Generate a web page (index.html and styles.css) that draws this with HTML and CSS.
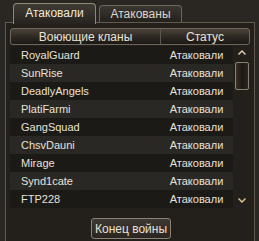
FILE: index.html
```html
<!DOCTYPE html>
<html lang="en">
<head>
    <meta charset="UTF-8">
    <title>Clan Wars</title>
    <link rel="stylesheet" href="styles.css">
</head>
<body>
    <div class="tabs">
        <div class="tab tab-active">Атаковали</div>
        <div class="tab">Атакованы</div>
    </div>

    <div class="panel">
        <div class="table-header">
            <div class="col-name">Воюющие кланы</div>
            <div class="col-status">Статус</div>
        </div>

        <div class="list-wrap">
            <div class="rows">
                <div class="row"><span class="clan">RoyalGuard</span><span class="status">Атаковали</span></div>
                <div class="row"><span class="clan">SunRise</span><span class="status">Атаковали</span></div>
                <div class="row"><span class="clan">DeadlyAngels</span><span class="status">Атаковали</span></div>
                <div class="row"><span class="clan">PlatiFarmi</span><span class="status">Атаковали</span></div>
                <div class="row"><span class="clan">GangSquad</span><span class="status">Атаковали</span></div>
                <div class="row"><span class="clan">ChsvDauni</span><span class="status">Атаковали</span></div>
                <div class="row"><span class="clan">Mirage</span><span class="status">Атаковали</span></div>
                <div class="row"><span class="clan">Synd1cate</span><span class="status">Атаковали</span></div>
                <div class="row"><span class="clan">FTP228</span><span class="status">Атаковали</span></div>
            </div>
            <div class="scrollbar">
                <svg class="arrow" width="8" height="5" viewBox="0 0 8 5"><polyline points="0.5,4.5 4,1 7.5,4.5" fill="none" stroke="#e6d6b4" stroke-width="1.4"/></svg>
                <div class="thumb"></div>
                <svg class="arrow arrow-down" width="8" height="5" viewBox="0 0 8 5"><polyline points="0.5,0.5 4,4 7.5,0.5" fill="none" stroke="#e0c89a" stroke-width="1.4"/></svg>
            </div>
        </div>

        <div class="actions">
            <button class="end-war">Конец войны</button>
        </div>
    </div>
</body>
</html>
```

FILE: styles.css
```css
html, body {
    margin: 0;
    height: 100%;
}
body {
    font-family: "Liberation Sans", Arial, sans-serif;
    font-size: 11px;
    color: #e8e2d6;
    background: #2a2723;
    padding-top: 3px;
    box-sizing: border-box;
    overflow: hidden;
}
.tabs {
    display: flex;
    align-items: flex-end;
    gap: 3px;
    margin-left: 13px;
    height: 19px;
}
.tab {
    width: 83px;
    height: 17px;
    box-sizing: border-box;
    border: 1px solid #6c655a;
    border-bottom: none;
    border-radius: 4px 4px 0 0;
    background: linear-gradient(#3a3630, #24211d);
    display: flex;
    align-items: center;
    justify-content: center;
    font-size: 12px;
    color: #ddd6c8;
}
.tab-active {
    height: 21px;
    margin-bottom: -2px;
    padding-bottom: 2px;
    position: relative;
    z-index: 1;
    border-color: #8e877b;
    background: linear-gradient(#403b33, #26231f);
    color: #eee8dc;
}
.panel {
    margin: 0 4px 0 5px;
    height: 230px;
    border: 1px solid #625a4e;
    border-bottom: none;
    background: #23201c;
    padding: 5px 4px 0 4px;
    box-sizing: border-box;
}
.table-header {
    display: flex;
    height: 17px;
    box-sizing: border-box;
    border: 1px solid #6e665a;
    border-radius: 3px;
    background: linear-gradient(#4a433a, #2a2520 60%, #1c1915);
    font-size: 12px;
    color: #e8e2d6;
}
.col-name {
    width: 149px;
    border-right: 1px solid #5e564a;
    display: flex;
    align-items: center;
    justify-content: center;
}
.col-status {
    flex: 1;
    display: flex;
    align-items: center;
    justify-content: center;
}
.list-wrap {
    display: flex;
    margin-top: 1px;
}
.rows {
    width: 223px;
}
.row {
    display: flex;
    height: 18px;
    align-items: center;
    background: #1c1a17;
}
.row:nth-child(even) {
    background: #2a2825;
}
.clan {
    width: 150px;
    padding-left: 11px;
    box-sizing: border-box;
}
.status {
    flex: 1;
    text-align: center;
}
.scrollbar {
    flex: 1;
    display: flex;
    flex-direction: column;
    align-items: center;
    padding-top: 4px;
}
.arrow {
    display: block;
}
.thumb {
    width: 14px;
    height: 28px;
    box-sizing: border-box;
    margin-top: 7px;
    border: 1px solid #8a8170;
    border-radius: 2px;
    background: linear-gradient(90deg, #3a3028, #1e1813 50%, #2c241d);
}
.arrow-down {
    margin-top: 108px;
}
.actions {
    display: flex;
    justify-content: center;
    margin-top: 10px;
    padding-left: 2px;
}
.end-war {
    height: 21px;
    padding: 0 3px;
    white-space: nowrap;
    font-family: "Liberation Sans", Arial, sans-serif;
    font-size: 12px;
    color: #e8e2d6;
    background: linear-gradient(#3e3832, #2a2520);
    border: 1px solid #8a8272;
    border-radius: 3px;
}
```
